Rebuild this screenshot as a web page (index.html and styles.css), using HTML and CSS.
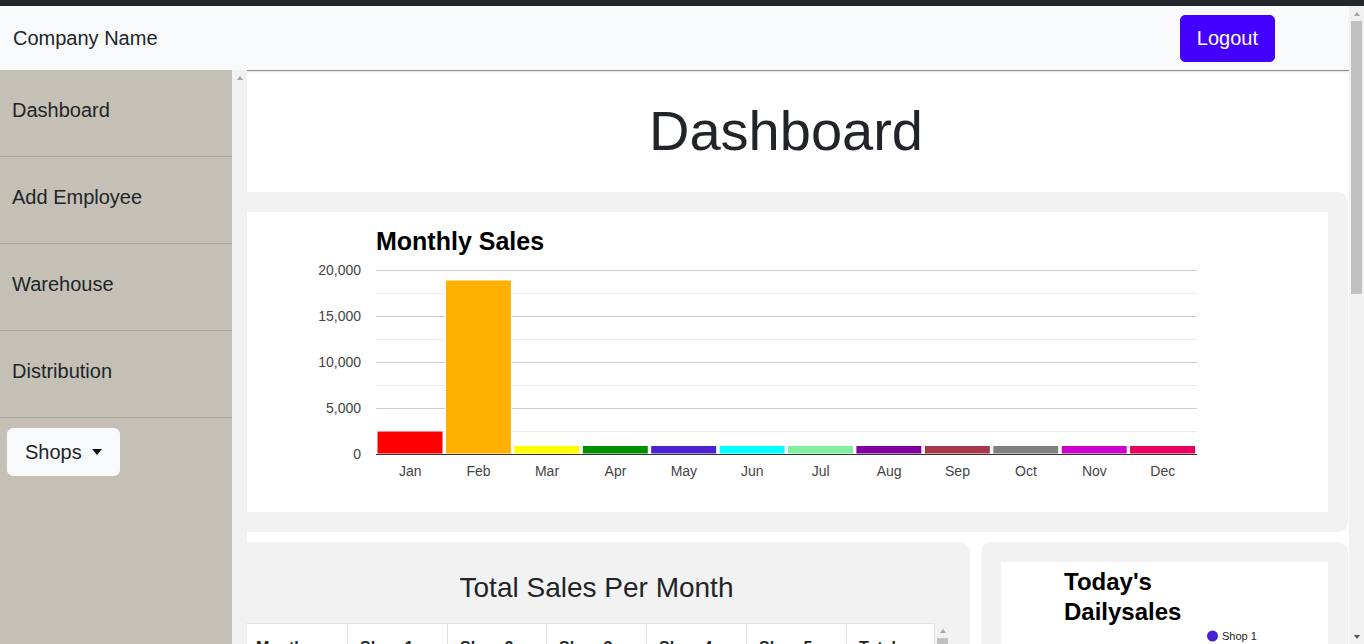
FILE: index.html
```html
<!DOCTYPE html>
<html lang="en">
<head>
<meta charset="utf-8">
<title>Dashboard</title>
<link rel="stylesheet" href="styles.css">
</head>
<body>
<div class="strip"></div>
<div class="frame">
  <div class="page">
    <nav class="navbar">
      <span class="brand">Company Name</span>
      <button class="logout">Logout</button>
    </nav>
    <div class="layout">
      <aside class="sidebar">
        <div class="side-content">
          <a class="nav-item" href="#">Dashboard</a>
          <a class="nav-item" href="#">Add Employee</a>
          <a class="nav-item" href="#">Warehouse</a>
          <a class="nav-item" href="#">Distribution</a>
          <button class="shops">Shops<span class="caret"></span></button>
        </div>
        <div class="sb">
          <div class="sb-btn"><span class="arrow-up"></span></div>
        </div>
      </aside>
      <main class="main">
        <h1 class="heading">Dashboard</h1>
        <section class="panel">
          <div class="chart-box">
            <svg class="chart" width="1086" height="300" viewBox="0 0 1086 300">
              <text class="chart-title" x="133" y="37.5">Monthly Sales</text>
              <g class="minor">
                <line x1="133" x2="954" y1="81.5" y2="81.5"/>
                <line x1="133" x2="954" y1="127.5" y2="127.5"/>
                <line x1="133" x2="954" y1="173.5" y2="173.5"/>
                <line x1="133" x2="954" y1="219.5" y2="219.5"/>
              </g>
              <g class="major">
                <line x1="133" x2="954" y1="58.5" y2="58.5"/>
                <line x1="133" x2="954" y1="104.5" y2="104.5"/>
                <line x1="133" x2="954" y1="150.5" y2="150.5"/>
                <line x1="133" x2="954" y1="196.5" y2="196.5"/>
              </g>
              <g class="ylabels">
                <text x="118" y="63">20,000</text>
                <text x="118" y="109">15,000</text>
                <text x="118" y="155">10,000</text>
                <text x="118" y="201">5,000</text>
                <text x="118" y="247">0</text>
              </g>
              <g class="bars">
                <rect x="134" y="219" width="66" height="23" fill="#ff0000"/>
                <rect x="202.4" y="68" width="66" height="174" fill="#ffb000"/>
                <rect x="270.8" y="233.5" width="66" height="8.5" fill="#ffff00"/>
                <rect x="339.3" y="233.5" width="66" height="8.5" fill="#008f00"/>
                <rect x="407.7" y="233.5" width="66" height="8.5" fill="#4b22d0"/>
                <rect x="476.1" y="233.5" width="66" height="8.5" fill="#00ffff"/>
                <rect x="544.5" y="233.5" width="66" height="8.5" fill="#80f0a0"/>
                <rect x="612.9" y="233.5" width="66" height="8.5" fill="#7f009f"/>
                <rect x="681.3" y="233.5" width="66" height="8.5" fill="#a63a4a"/>
                <rect x="749.8" y="233.5" width="66" height="8.5" fill="#808080"/>
                <rect x="818.2" y="233.5" width="66" height="8.5" fill="#cc00cc"/>
                <rect x="886.6" y="233.5" width="66" height="8.5" fill="#e80060"/>
              </g>
              <line class="axis" x1="133" x2="954" y1="242.5" y2="242.5"/>
              <g class="xlabels">
                <text x="167.2" y="264">Jan</text>
                <text x="235.6" y="264">Feb</text>
                <text x="304" y="264">Mar</text>
                <text x="372.5" y="264">Apr</text>
                <text x="440.9" y="264">May</text>
                <text x="509.3" y="264">Jun</text>
                <text x="577.7" y="264">Jul</text>
                <text x="646.1" y="264">Aug</text>
                <text x="714.5" y="264">Sep</text>
                <text x="783" y="264">Oct</text>
                <text x="851.4" y="264">Nov</text>
                <text x="919.8" y="264">Dec</text>
              </g>
            </svg>
          </div>
        </section>
        <div class="row">
          <section class="card">
            <h3 class="card-title">Total Sales Per Month</h3>
            <div class="table-wrap">
              <div class="table-view">
                <table class="sales">
                  <colgroup>
                    <col class="c-month"><col class="c-shop"><col class="c-shop2"><col class="c-shop"><col class="c-shop"><col class="c-shop"><col>
                  </colgroup>
                  <thead>
                    <tr><th>Month</th><th>Shop 1</th><th>Shop 2</th><th>Shop 3</th><th>Shop 4</th><th>Shop 5</th><th>Total</th></tr>
                  </thead>
                  <tbody>
                    <tr><td>Jan</td><td>1200</td><td>400</td><td>300</td><td>350</td><td>250</td><td>2500</td></tr>
                    <tr><td>Feb</td><td>9000</td><td>3400</td><td>2500</td><td>2000</td><td>2000</td><td>18900</td></tr>
                    <tr><td>Mar</td><td>500</td><td>200</td><td>100</td><td>100</td><td>100</td><td>1000</td></tr>
                    <tr><td>Apr</td><td>500</td><td>200</td><td>100</td><td>100</td><td>100</td><td>1000</td></tr>
                    <tr><td>May</td><td>500</td><td>200</td><td>100</td><td>100</td><td>100</td><td>1000</td></tr>
                    <tr><td>Jun</td><td>500</td><td>200</td><td>100</td><td>100</td><td>100</td><td>1000</td></tr>
                    <tr><td>Jul</td><td>500</td><td>200</td><td>100</td><td>100</td><td>100</td><td>1000</td></tr>
                    <tr><td>Aug</td><td>500</td><td>200</td><td>100</td><td>100</td><td>100</td><td>1000</td></tr>
                  </tbody>
                </table>
              </div>
              <div class="sb">
                <div class="sb-btn"><span class="arrow-up"></span></div>
                <div class="sb-thumb small"></div>
                <div class="sb-fill"></div>
              </div>
            </div>
          </section>
          <section class="card">
            <div class="pie-box">
              <svg class="pie" width="328" height="400" viewBox="0 0 328 400">
                <text class="pie-title" x="63" y="28">Today's</text>
                <text class="pie-title" x="63" y="58">Dailysales</text>
                <circle cx="211.5" cy="74" r="5.5" fill="#4b22d0"/>
                <text class="legend" x="221" y="78">Shop 1</text>
                <circle cx="150" cy="230" r="110" fill="#4b22d0"/>
              </svg>
            </div>
          </section>
        </div>
      </main>
    </div>
  </div>
  <div class="sb page-sb">
    <div class="sb-btn"><span class="arrow-up"></span></div>
    <div class="sb-thumb page-thumb"></div>
    <div class="sb-fill"></div>
    <div class="sb-btn"><span class="arrow-down"></span></div>
  </div>
</div>
</body>
</html>
```

FILE: styles.css
```css
html, body {
  margin: 0;
  height: 100%;
  overflow: hidden;
  font-family: "Liberation Sans", Arial, sans-serif;
  color: #212529;
}

.strip {
  height: 6px;
  background: #24282c;
}

.frame {
  display: flex;
  height: 638px;
}

.page {
  flex: 1;
  min-width: 0;
  overflow: hidden;
}

/* fake classic scrollbars */
.sb {
  flex: 0 0 15px;
  width: 15px;
  background: #f1f1f1;
  display: flex;
  flex-direction: column;
  align-items: center;
}

.sb-btn {
  flex: 0 0 15px;
  width: 100%;
  display: flex;
  align-items: center;
  justify-content: center;
}

.arrow-up {
  width: 0;
  height: 0;
  border-left: 3.5px solid transparent;
  border-right: 3.5px solid transparent;
  border-bottom: 4px solid #a3a3a3;
}

.arrow-down {
  width: 0;
  height: 0;
  border-left: 3.5px solid transparent;
  border-right: 3.5px solid transparent;
  border-top: 4px solid #505050;
}

.sb-thumb {
  width: 11px;
  background: #c1c1c1;
}

.page-thumb {
  flex: 0 0 273px;
}

.small {
  flex: 0 0 120px;
}

.sb-fill {
  flex: 1;
}

.navbar {
  height: 64px;
  box-sizing: border-box;
  background: #f8f9fa;
  display: flex;
  align-items: center;
  justify-content: space-between;
  padding: 0 74px 0 13px;
}

.brand {
  font-size: 20px;
  line-height: 30px;
  color: #212529;
}

.logout {
  font-family: inherit;
  font-size: 20px;
  line-height: 29px;
  padding: 8px 16px;
  color: #fff;
  background: #4400ff;
  border: 1px solid #4400ff;
  border-radius: 5px;
}

.layout {
  display: flex;
  align-items: flex-start;
}

.sidebar {
  position: relative;
  z-index: 2;
  flex: 0 0 247px;
  width: 247px;
  height: 574px;
  display: flex;
}

.side-content {
  flex: 1;
  background: #c4c0b6;
}

.nav-item {
  display: block;
  padding: 28px 12px 34px;
  font-size: 20px;
  line-height: 24px;
  color: #212529;
  text-decoration: none;
  border-bottom: 1px solid #aba79e;
}

.shops {
  display: inline-flex;
  align-items: center;
  margin: 10px 0 0 7px;
  height: 48px;
  padding: 0 17px;
  font-family: inherit;
  font-size: 20px;
  color: #212529;
  background: #f8f9fa;
  border: 1px solid #f8f9fa;
  border-radius: 6px;
}

.caret {
  width: 0;
  height: 0;
  margin-left: 10px;
  border-left: 5.5px solid transparent;
  border-right: 5.5px solid transparent;
  border-top: 6px solid #111;
}

.main {
  flex: 1;
  min-width: 0;
  margin-left: -24px;
  padding-bottom: 20px;
  background: #fff;
  box-shadow: inset 0 1px 0 #8f8f8f, inset 0 3px 2px -1px rgba(0, 0, 0, 0.12);
}

.heading {
  margin: 0;
  padding: 27px 0 28px;
  text-align: center;
  font-size: 56px;
  font-weight: 400;
  line-height: 1.2;
  color: #212529;
}

.panel {
  margin-right: 1px;
  padding: 20px;
  background: #f2f2f2;
  border-radius: 10px;
}

.chart-box {
  height: 300px;
  background: #fff;
}

.chart {
  display: block;
  font-family: "Liberation Sans", Arial, sans-serif;
}

.chart-title {
  font-size: 25px;
  font-weight: 700;
  fill: #000;
}

.minor line {
  stroke: #ebebeb;
  stroke-width: 1;
}

.major line {
  stroke: #cccccc;
  stroke-width: 1;
}

.axis {
  stroke: #333;
  stroke-width: 1;
}

.bars rect {
  stroke: #fff;
  stroke-width: 1;
}

.ylabels text {
  font-size: 14px;
  fill: #444;
  text-anchor: end;
}

.xlabels text {
  font-size: 14px;
  fill: #444;
  text-anchor: middle;
}

.row {
  display: grid;
  grid-template-columns: 747px 367px;
  column-gap: 11px;
  margin-top: 10px;
}

.card {
  padding: 20px;
  background: #f2f2f2;
  border-radius: 10px;
}

.card-title {
  margin: 9px 0 18px;
  text-align: center;
  font-size: 28px;
  font-weight: 400;
  line-height: 34px;
  color: #212529;
}

.table-wrap {
  height: 500px;
  display: flex;
  background: #fff;
}

.table-view {
  flex: 1;
  min-width: 0;
  overflow: hidden;
}

.sales {
  width: 100%;
  table-layout: fixed;
  border-collapse: collapse;
  font-size: 16px;
  line-height: 24px;
  color: #212529;
}

.c-month { width: 104px; }
.c-shop { width: 100px; }
.c-shop2 { width: 99px; }

.sales th,
.sales td {
  padding: 12px;
  text-align: left;
  border: 1px solid #dee2e6;
}

.sales th {
  font-weight: 700;
}

.pie-box {
  height: 974px;
  background: #fff;
}

.pie {
  display: block;
  font-family: "Liberation Sans", Arial, sans-serif;
}

.pie-title {
  font-size: 24px;
  font-weight: 700;
  fill: #000;
}

.legend {
  font-size: 11px;
  fill: #222;
}
```
